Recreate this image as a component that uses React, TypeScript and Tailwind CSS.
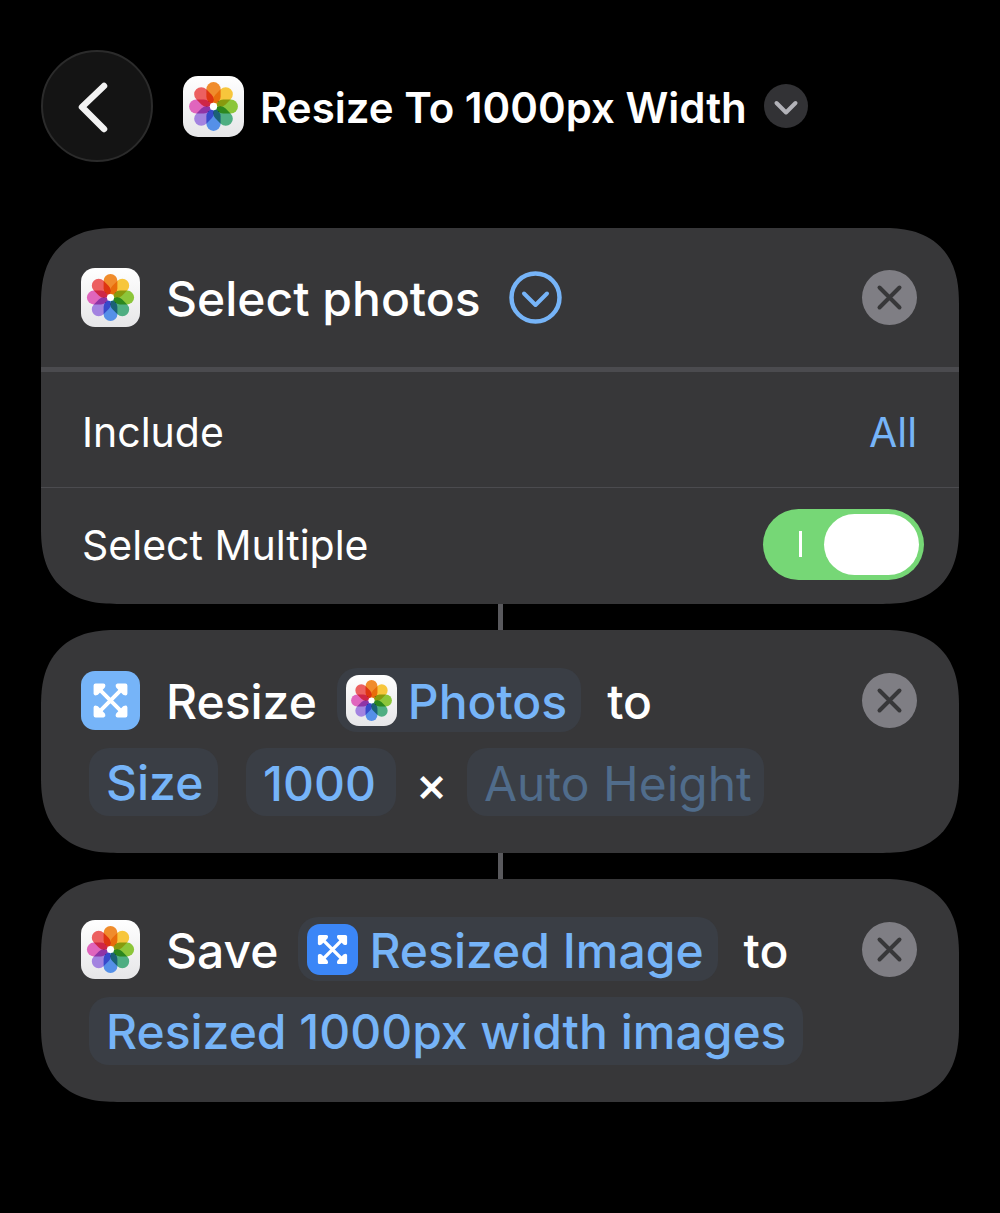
import { useState } from "react";
import type { ReactNode } from "react";
import clsx from "clsx";

const petals = [
  { angle: 0, color: "#f08c2c" },
  { angle: 45, color: "#f7c63c" },
  { angle: 90, color: "#8cc63a" },
  { angle: 135, color: "#4fae82" },
  { angle: 180, color: "#5590e8" },
  { angle: 225, color: "#a383e0" },
  { angle: 270, color: "#e065bd" },
  { angle: 315, color: "#ec6060" },
];

function PhotosIcon({ className }: { className?: string }) {
  return (
    <span
      className={clsx(
        "block shrink-0 bg-linear-to-b from-white to-[#e6e6e8]",
        className
      )}
    >
      <svg viewBox="0 0 60 60" className="isolate block size-full" aria-hidden="true">
        {petals.map((p) => (
          <rect
            key={p.angle}
            x="23"
            y="6"
            width="14"
            height="21.5"
            rx="7"
            fill={p.color}
            className="mix-blend-multiply"
            transform={`rotate(${p.angle} 30 30)`}
          />
        ))}
        <circle cx="30" cy="30" r="3.6" fill="#fff" />
      </svg>
    </span>
  );
}

function ResizeIcon({ className }: { className?: string }) {
  return (
    <span className={clsx("block shrink-0 text-white", className)}>
      <svg viewBox="0 0 60 60" className="block size-full" aria-hidden="true">
        <path d="M19 19L41 41M41 19L19 41" stroke="currentColor" strokeWidth="4" />
        {[0, 90, 180, 270].map((a) => (
          <path
            key={a}
            d="M14.8 14.8H22.8L22.4 16L16 22.4L14.8 22.8Z"
            fill="currentColor"
            stroke="currentColor"
            strokeWidth="4"
            strokeLinejoin="round"
            transform={`rotate(${a} 30 30)`}
          />
        ))}
      </svg>
    </span>
  );
}

function Card({ children }: { children: ReactNode }) {
  return (
    <section className="overflow-hidden rounded-[76px] bg-[#373739] [corner-shape:superellipse(1.3)]">
      {children}
    </section>
  );
}

function Connector() {
  return <div className="mx-auto h-[26px] w-[5px] bg-[#59595d]" />;
}

function RemoveButton() {
  return (
    <button
      type="button"
      aria-label="Remove action"
      className="ml-auto flex size-[55px] shrink-0 items-center justify-center rounded-full bg-[#7f7e84]"
    >
      <svg viewBox="0 0 55 55" className="size-full" aria-hidden="true">
        <path
          d="M17.5 17.5L37.5 37.5M37.5 17.5L17.5 37.5"
          stroke="#373739"
          strokeWidth="4"
          strokeLinecap="round"
        />
      </svg>
    </button>
  );
}

function VariableToken({ icon, children }: { icon: ReactNode; children: ReactNode }) {
  return (
    <button
      type="button"
      className="flex h-16 items-center gap-[11px] rounded-[20px] bg-[#3a3e45] pr-3.5 pl-[9px] text-[#76b4f8]"
    >
      {icon}
      <span className="pt-[3px]">{children}</span>
    </button>
  );
}

const token =
  "h-[68px] rounded-[20px] bg-[#3a3e45] pt-0.5 pl-[17px] text-[#76b4f8] outline-none";

export default function App() {
  const [multiple, setMultiple] = useState(true);
  const [width, setWidth] = useState("1000");
  const [height, setHeight] = useState("");

  return (
    <main className="min-h-screen bg-black px-[41px] pt-[50px] pb-[111px] font-['Inter',sans-serif] text-white">
      <header className="mb-[66px] flex items-center">
        <button
          type="button"
          aria-label="Back"
          className="mr-[30px] size-28 shrink-0 rounded-full border-2 border-[#2b2b2b] bg-[#141414]"
        >
          <svg viewBox="0 0 108 108" className="size-full" fill="none" aria-hidden="true">
            <path
              d="M61 34L39 55L61 77"
              stroke="#f2f2f2"
              strokeWidth="6.5"
              strokeLinecap="round"
              strokeLinejoin="round"
            />
          </svg>
        </button>
        <PhotosIcon className="size-[61px] rounded-[15px]" />
        <h1 className="ml-4 pt-[3px] text-[42px] leading-[60px] font-semibold whitespace-nowrap">
          Resize To 1000px Width
        </h1>
        <button
          type="button"
          aria-label="Shortcut options"
          className="ml-[17px] size-11 shrink-0 rounded-full bg-[#323235]"
        >
          <svg viewBox="0 0 44 44" className="size-full" fill="none" aria-hidden="true">
            <path
              d="M12.5 19L22 28.5L31.5 19"
              stroke="#b2b2b8"
              strokeWidth="4"
              strokeLinecap="round"
              strokeLinejoin="round"
            />
          </svg>
        </button>
      </header>

      <Card>
        <div className="flex h-[139px] items-center pr-[42px] pl-10">
          <PhotosIcon className="size-[59px] rounded-[14px]" />
          <h2 className="ml-[26px] pt-[3px] text-5xl font-medium whitespace-nowrap">
            Select photos
          </h2>
          <button type="button" aria-label="Show less" className="ml-7 size-[53px] shrink-0">
            <svg viewBox="0 0 53 53" className="size-full" fill="none" aria-hidden="true">
              <circle cx="26.5" cy="26.5" r="24" stroke="#76b4f8" strokeWidth="4.5" />
              <path
                d="M15 22.5L26.5 34L38 22.5"
                stroke="#76b4f8"
                strokeWidth="4"
                strokeLinecap="round"
                strokeLinejoin="round"
              />
            </svg>
          </button>
          <RemoveButton />
        </div>
        <div className="flex h-[121px] items-center justify-between border-t-[5px] border-b border-t-[#4b4b4f] border-b-[#4b4b4f] px-[41px] pt-1.5 text-[41px]">
          <label htmlFor="include">Include</label>
          <select id="include" className="appearance-none text-[#76b4f8] outline-none">
            <option>All</option>
          </select>
        </div>
        <div className="flex h-[116px] items-center justify-between pr-[35px] pb-1 pl-[41px] text-[41px]">
          <label htmlFor="multiple" className="pt-[3px]">
            Select Multiple
          </label>
          <label
            className={clsx(
              "flex h-[71px] w-[161px] items-center rounded-full p-[5px]",
              multiple ? "justify-end bg-[#76d776]" : "justify-start bg-[#5b5b60]"
            )}
          >
            <input
              id="multiple"
              type="checkbox"
              role="switch"
              className="sr-only"
              checked={multiple}
              onChange={(e) => setMultiple(e.target.checked)}
            />
            {multiple && <span className="mr-[22px] h-[26px] w-[3px] bg-white" />}
            <span className="h-[61px] w-[95px] rounded-full bg-white" />
          </label>
        </div>
      </Card>

      <Connector />

      <Card>
        <div className="pt-[38px] pr-[42px] pb-[37px] pl-10 text-5xl font-medium whitespace-nowrap">
          <div className="flex h-16 items-center">
            <ResizeIcon className="size-[59px] rounded-[14px] bg-[#76b4f8]" />
            <h2 className="mr-5 ml-[26px] pt-[3px]">Resize</h2>
            <VariableToken icon={<PhotosIcon className="size-[51px] rounded-[13px]" />}>
              Photos
            </VariableToken>
            <span className="ml-[26px] pt-[3px]">to</span>
            <RemoveButton />
          </div>
          <div className="mt-4 ml-2 flex items-center">
            <select aria-label="Resize by" className={clsx(token, "w-[129px] appearance-none")}>
              <option>Size</option>
            </select>
            <input
              aria-label="Width"
              value={width}
              onChange={(e) => setWidth(e.target.value)}
              className={clsx(token, "ml-7 w-[150px]")}
            />
            <span className="w-[71px] pt-[3px] text-center">×</span>
            <input
              aria-label="Height"
              placeholder="Auto Height"
              value={height}
              onChange={(e) => setHeight(e.target.value)}
              className={clsx(token, "w-[297px] placeholder:font-normal placeholder:text-[#506c8b]")}
            />
          </div>
        </div>
      </Card>

      <Connector />

      <Card>
        <div className="pt-[38px] pr-[42px] pb-[37px] pl-10 text-5xl font-medium whitespace-nowrap">
          <div className="flex h-16 items-center">
            <PhotosIcon className="size-[59px] rounded-[14px]" />
            <h2 className="mr-5 ml-[26px] pt-[3px]">Save</h2>
            <VariableToken icon={<ResizeIcon className="size-[51px] rounded-[13px] bg-[#3b86f7]" />}>
              Resized Image
            </VariableToken>
            <span className="ml-[26px] pt-[3px]">to</span>
            <RemoveButton />
          </div>
          <div className="mt-4 ml-2 flex">
            <button type="button" className={clsx(token, "pr-[17px]")}>
              Resized 1000px width images
            </button>
          </div>
        </div>
      </Card>
    </main>
  );
}
